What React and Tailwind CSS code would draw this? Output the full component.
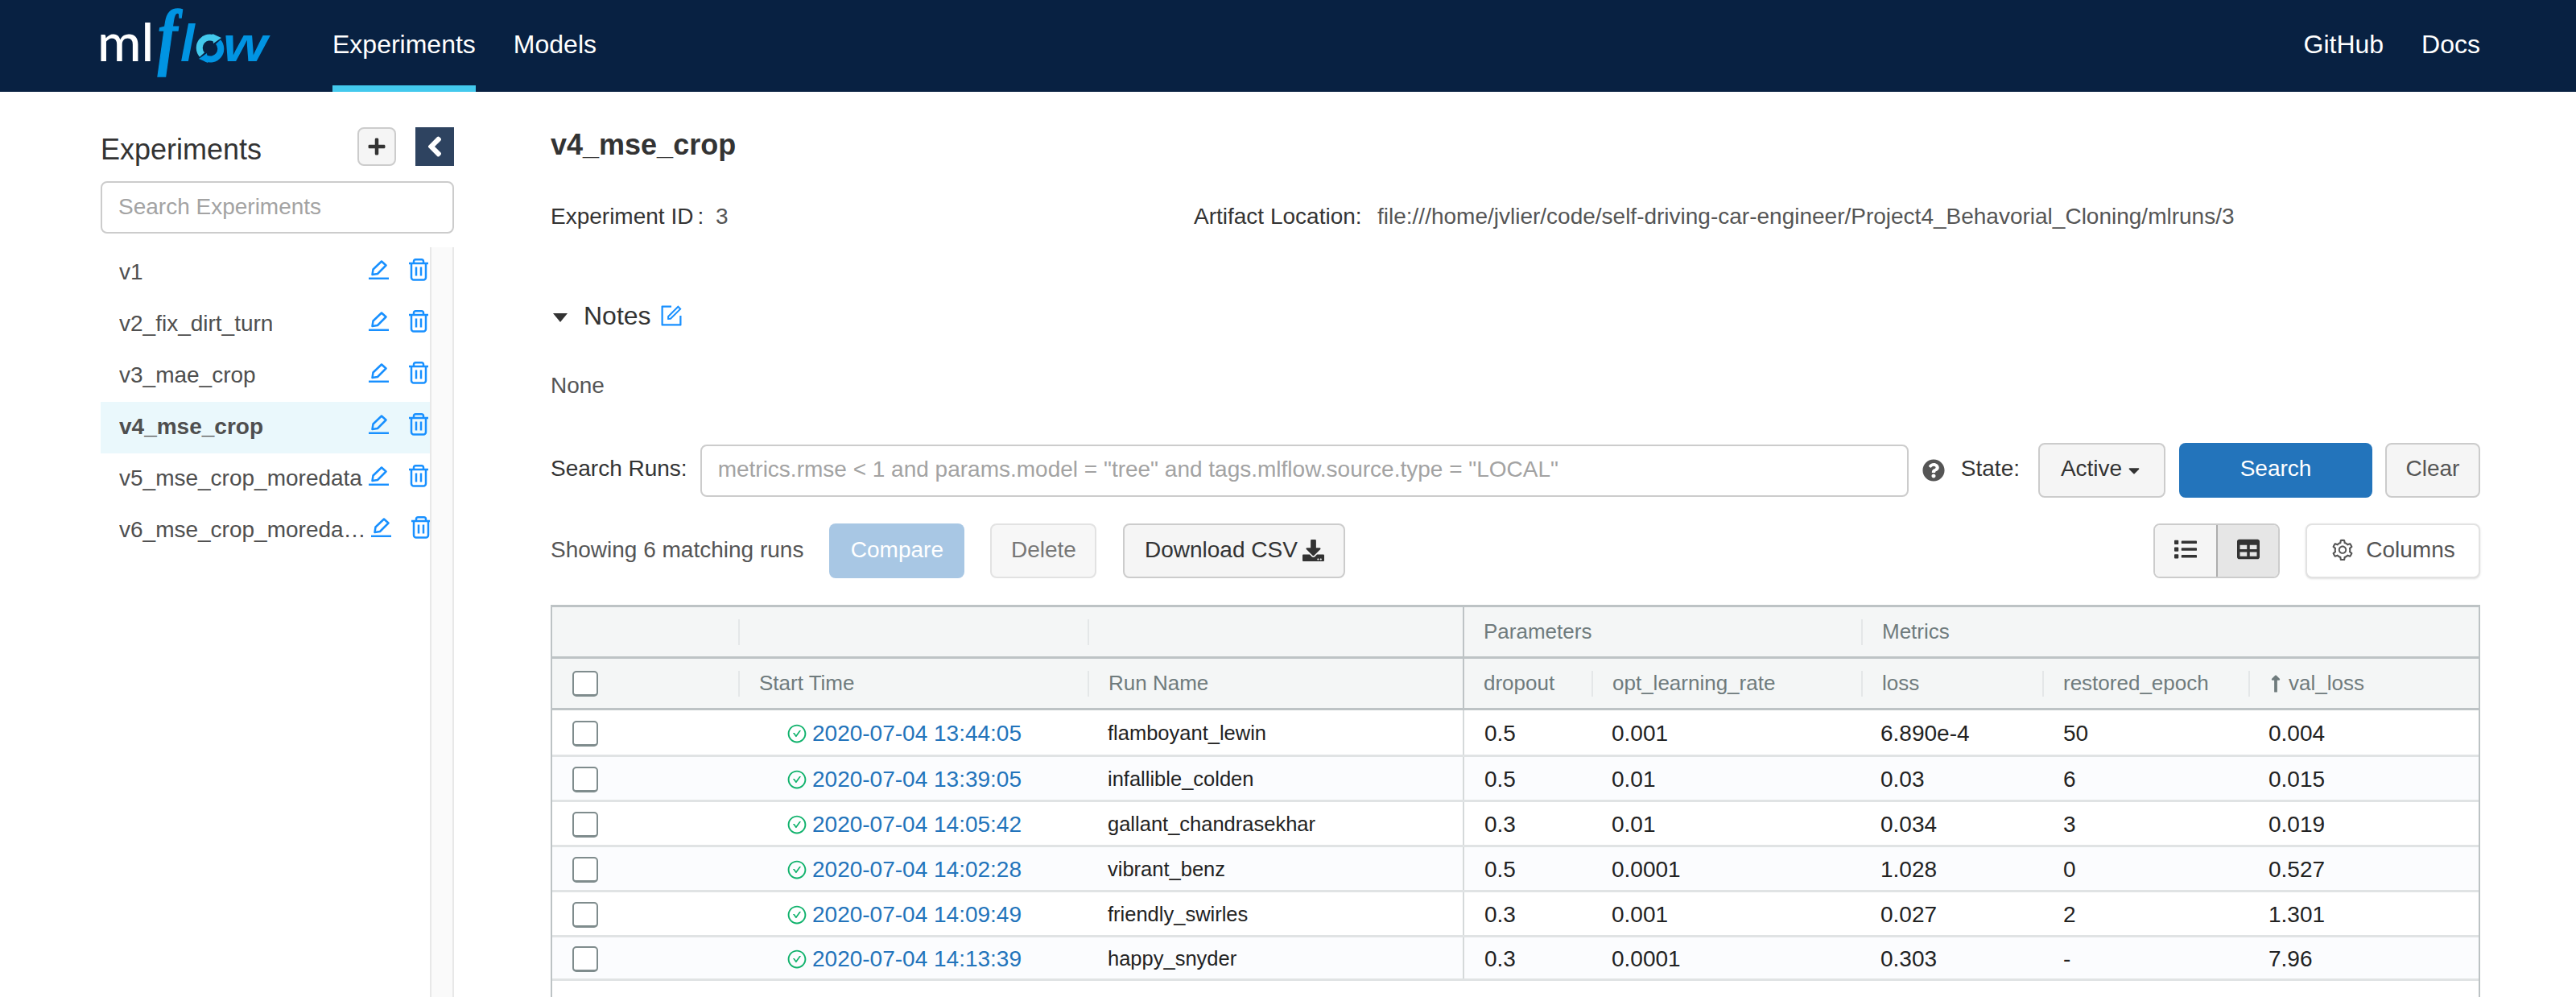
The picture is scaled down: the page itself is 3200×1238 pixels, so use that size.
import React from "react";
import {
  AiOutlineForm,
  AiOutlineSetting,
  AiOutlineCheckCircle,
} from "react-icons/ai";
import {
  FaPlus,
  FaAngleLeft,
  FaQuestionCircle,
  FaCaretDown,
  FaDownload,
  FaList,
  FaTable,
  FaLongArrowAltUp,
} from "react-icons/fa";

const experiments = [
  { name: "v1" },
  { name: "v2_fix_dirt_turn" },
  { name: "v3_mae_crop" },
  { name: "v4_mse_crop", active: true },
  { name: "v5_mse_crop_moredata" },
  { name: "v6_mse_crop_moreda…", shifted: true },
];

const runs = [
  ["2020-07-04 13:44:05", "flamboyant_lewin", "0.5", "0.001", "6.890e-4", "50", "0.004"],
  ["2020-07-04 13:39:05", "infallible_colden", "0.5", "0.01", "0.03", "6", "0.015"],
  ["2020-07-04 14:05:42", "gallant_chandrasekhar", "0.3", "0.01", "0.034", "3", "0.019"],
  ["2020-07-04 14:02:28", "vibrant_benz", "0.5", "0.0001", "1.028", "0", "0.527"],
  ["2020-07-04 14:09:49", "friendly_swirles", "0.3", "0.001", "0.027", "2", "1.301"],
  ["2020-07-04 14:13:39", "happy_snyder", "0.3", "0.0001", "0.303", "-", "7.96"],
];

const gridCols =
  "grid grid-cols-[231px_434px_466px_160px_335px_225px_256px_1fr]";

const Logo = () => (
  <svg width="208" height="80" viewBox="0 0 208 80" className="mr-[81px] mb-[6px] shrink-0 overflow-visible">
    <text x="-3" y="62" fontSize="66" fontFamily="Lato, sans-serif" fontWeight="500" fill="#fff">
      ml
    </text>
    <text
      transform="translate(72 62) scale(0.8 1)"
      fontSize="92"
      fontFamily="'Liberation Serif', serif"
      fontStyle="italic"
      fontWeight="700"
      fill="#0194e2"
      stroke="#0194e2"
      strokeWidth="1.5"
    >
      f
    </text>
    <text x="100" y="62" fontSize="64" fontFamily="'Liberation Sans', sans-serif" fontStyle="italic" fontWeight="700" fill="#0194e2">
      l
    </text>
    {/* the o is two chasing arrows */}
    <g fill="none" strokeWidth="8" transform="translate(120 29)">
      <path d="M23 5 A 13 13 0 0 0 7 25" stroke="#43c9ed" />
      <path d="M11 29 A 13 13 0 0 0 27 9" stroke="#0194e2" />
      <path d="M20 -1 L31 4 L21 11 Z" fill="#43c9ed" />
      <path d="M14 35 L3 30 L13 23 Z" fill="#0194e2" />
    </g>
    <text
      x="153"
      y="62"
      fontSize="62"
      textLength="55"
      lengthAdjust="spacingAndGlyphs"
      fontFamily="'Liberation Sans', sans-serif"
      fontStyle="italic"
      fontWeight="700"
      fill="#0194e2"
    >
      w
    </text>
  </svg>
);

const EditIcon = () => (
  <svg width="25" height="24" viewBox="0 0 25 24" fill="none" stroke="#1890ff" strokeWidth="2.5" className="shrink-0 mb-[8px]">
    <path d="M0 22.8H25" />
    <path d="M4.5 18 L5.5 11.5 L16 1.5 L21.5 6.5 L11 17 Z" strokeLinejoin="round" />
  </svg>
);

const TrashIcon = () => (
  <svg width="24" height="28" viewBox="0 0 24 28" fill="none" stroke="#1890ff" strokeWidth="2.5" className="shrink-0 ml-[25px] mb-[8px]">
    <path d="M0 6H24" />
    <path d="M6 6V3.5a2.2 2.2 0 0 1 2.2-2.2h7.6a2.2 2.2 0 0 1 2.2 2.2V6" />
    <path d="M3 6V23.5a3 3 0 0 0 3 3h12a3 3 0 0 0 3-3V6" />
    <path d="M9 10.5V21.5M15 10.5V21.5" />
  </svg>
);

const Header = () => (
  <header className="h-[114px] bg-[#082142] flex items-center pl-[124px] pr-[119px] text-white text-[32px]">
    <Logo />
    <nav className="flex h-full gap-[47px]">
      <a className="flex items-center h-full border-b-8 border-[#43c9ed] pt-[4px]">
        Experiments
      </a>
      <a className="flex items-center h-full pb-[4px]">Models</a>
    </nav>
    <div className="ml-auto flex gap-[47px] pb-[4px]">
      <a>GitHub</a>
      <a>Docs</a>
    </div>
  </header>
);

const Sidebar = () => (
  <aside className="w-[439px] ml-[125px] shrink-0 pt-[44px] flex flex-col h-[1124px]">
    <div className="flex items-center h-[48px] mb-[19px]">
      <h2 className="text-[36px] text-[#333] flex-1 pt-[8px]">Experiments</h2>
      <button className="w-[48px] h-[48px] rounded-lg border-2 border-[#ccc] bg-[#f5f5f5] flex items-center justify-center text-[#333] text-[24px]">
        <FaPlus />
      </button>
      <button className="w-[48px] h-[48px] ml-[24px] bg-[#2e4360] flex items-center justify-center text-white text-[40px]">
        <FaAngleLeft />
      </button>
    </div>
    <input
      className="h-[65px] w-full border-2 border-[#ccc] rounded-lg px-[20px] pb-[2px] text-[28px] placeholder:text-[#a3a3a3] bg-white"
      placeholder="Search Experiments"
    />
    <div className="flex flex-1 mt-[17px]">
      <ul className="w-[409px]">
        {experiments.map((exp) => (
          <li
            key={exp.name}
            className={`h-[64px] flex items-center pl-[23px] text-[28px] text-[#4f4f4f] ${
              exp.active ? "bg-[#eaf8fc] font-bold" : ""
            } ${exp.shifted ? "pr-0 -mr-[1px]" : "pr-[2px]"}`}
          >
            <span className="flex-1 whitespace-nowrap overflow-hidden pb-[2px]">
              {exp.name}
            </span>
            <EditIcon />
            <TrashIcon />
          </li>
        ))}
      </ul>
      <div className="w-[30px] bg-[#fafafa] border-x-2 border-[#e8e8e8]" />
    </div>
  </aside>
);

const Checkbox = ({ className = "" }) => (
  <div className={`w-[32px] h-[32px] rounded-[5px] border-2 border-[#7f8c8d] border-b-[3px] bg-white ${className}`} />
);

const HeaderCell = ({ children, divider = true, className = "" }) => (
  <div className={`flex items-center h-full ${className}`}>
    <div className={`flex items-center h-[32px] pl-[24px] whitespace-nowrap ${divider ? "border-l-2 border-[#e4e7e8]" : ""}`}>
      {children}
    </div>
  </div>
);

const RunsTable = () => (
  <div className="mt-[33px] flex-1 border-x-2 border-t-[3px] border-[#bdc3c5] text-[26px]">
    <div className={`${gridCols} h-[64px] bg-[#f4f6f6] border-b-[3px] border-[#bdc3c5] text-[#6f7b7d]`}>
      <div />
      <HeaderCell />
      <HeaderCell />
      <div className="col-span-2 border-l-2 border-[#bdc3c5] flex items-center pl-[24px]">
        Parameters
      </div>
      <HeaderCell className="col-span-3">Metrics</HeaderCell>
    </div>
    <div className={`${gridCols} h-[64px] bg-[#f4f6f6] border-b-[3px] border-[#bdc3c5] text-[#6f7b7d]`}>
      <div className="flex items-center pl-[25px]">
        <Checkbox />
      </div>
      <HeaderCell>Start Time</HeaderCell>
      <HeaderCell>Run Name</HeaderCell>
      <div className="border-l-2 border-[#bdc3c5] flex items-center pl-[24px]">
        dropout
      </div>
      <HeaderCell>opt_learning_rate</HeaderCell>
      <HeaderCell>loss</HeaderCell>
      <HeaderCell>restored_epoch</HeaderCell>
      <HeaderCell>
        <FaLongArrowAltUp className="text-[24px] -ml-[4px] mr-[4px]" />
        val_loss
      </HeaderCell>
    </div>
    {runs.map((run, i) => (
      <div
        key={run[0]}
        className={`${gridCols} border-b-[3px] border-[#e0e3e4] text-[28px] text-[#222] ${
          i === 0 ? "h-[58px]" : i === 5 ? "h-[54px]" : "h-[56px]"
        } ${i % 2 === 1 ? "bg-[#fbfcfe]" : "bg-white"}`}
      >
        <div className="flex items-center pl-[25px]">
          <Checkbox className="mt-[3px]" />
        </div>
        <div className="flex items-center pl-[60px] pt-[2px] text-[#2374bb]">
          <AiOutlineCheckCircle className="text-[#10b26c] text-[26px] mr-[6px]" />
          {run[0]}
        </div>
        <div className="flex items-center pl-[25px] pt-[2px] text-[25.5px]">{run[1]}</div>
        <div className="flex items-center pl-[25px] pt-[2px] border-l-2 border-[#d5d9da]">{run[2]}</div>
        <div className="flex items-center pl-[25px] pt-[2px]">{run[3]}</div>
        <div className="flex items-center pl-[24px] pt-[2px]">{run[4]}</div>
        <div className="flex items-center pl-[26px] pt-[2px]">{run[5]}</div>
        <div className="flex items-center pl-[25px] pt-[2px]">{run[6]}</div>
      </div>
    ))}
  </div>
);

const Main = () => (
  <main className="flex-1 ml-[120px] pr-[119px] flex flex-col h-[1124px] text-[28px] text-[#333]">
    <h1 className="mt-[42px] h-[48px] flex items-center text-[36px] font-bold">
      v4_mse_crop
    </h1>
    <div className="mt-[45px] h-[40px] flex items-center">
      <span className="w-[205px]">
        Experiment ID<span className="ml-[5px]">:</span>
      </span>
      <span className="w-[594px] text-[#555]">3</span>
      <span className="w-[228px]">Artifact Location:</span>
      <span className="text-[#555]">
        file:///home/jvlier/code/self-driving-car-engineer/Project4_Behavorial_Cloning/mlruns/3
      </span>
    </div>
    <div className="mt-[81px] h-[44px] flex items-center">
      <svg width="18" height="11" viewBox="0 0 18 11" className="ml-[3px] mt-[5px]">
        <polygon points="0,0 18,0 9,11" fill="#333" />
      </svg>
      <span className="ml-[20px] text-[32px]">Notes</span>
      <AiOutlineForm className="ml-[9px] text-[#1890ff] text-[32px]" />
    </div>
    <div className="mt-[45px] h-[40px] flex items-center text-[#555]">None</div>
    <div className="mt-[51px] h-[68px] flex items-center">
      <span className="pb-[4px]">Search Runs:</span>
      <input
        className="ml-[16px] flex-1 h-[65px] border-2 border-[#ccc] rounded-lg px-[20px] pb-[2px] placeholder:text-[#a3a3a3]"
        placeholder={'metrics.rmse < 1 and params.model = "tree" and tags.mlflow.source.type = "LOCAL"'}
      />
      <FaQuestionCircle className="ml-[17px] text-[#555] text-[28px] shrink-0" />
      <span className="ml-[20px] pb-[4px]">State:</span>
      <button className="ml-[23px] w-[158px] h-[68px] rounded-lg border-2 border-[#ccc] bg-[#f5f5f5] flex items-center justify-center gap-[4px] pb-[4px]">
        Active
        <FaCaretDown className="text-[22px] mt-[4px]" />
      </button>
      <button className="ml-[17px] w-[240px] h-[68px] rounded-lg bg-[#2374bb] text-white pb-[4px]">
        Search
      </button>
      <button className="ml-[16px] w-[118px] h-[68px] rounded-lg border-2 border-[#ccc] bg-[#f5f5f5] text-[#555] pb-[4px]">
        Clear
      </button>
    </div>
    <div className="mt-[32px] h-[68px] flex items-center">
      <span className="text-[#555] pb-[2px]">Showing 6 matching runs</span>
      <button className="ml-[32px] w-[168px] h-[68px] rounded-lg bg-[#a8c7e4] text-white pb-[2px]">
        Compare
      </button>
      <button className="ml-[32px] w-[132px] h-[68px] rounded-lg border-2 border-[#e2e2e2] bg-[#f7f7f7] text-[#777] pb-[2px]">
        Delete
      </button>
      <button className="ml-[33px] w-[276px] h-[68px] rounded-lg border-2 border-[#ccc] bg-[#f5f5f5] flex items-center justify-center gap-[6px] text-[#333] pb-[2px]">
        Download CSV
        <FaDownload className="text-[27px]" />
      </button>
      <div className="ml-auto flex h-[68px] w-[157px] rounded-lg border-2 border-[#ccc] overflow-hidden">
        <div className="w-[76px] bg-[#f5f5f5] flex items-center justify-center text-[#333] text-[28px] pb-[4px]">
          <FaList />
        </div>
        <div className="flex-1 bg-[#e6e6e6] border-l-2 border-[#adadad] flex items-center justify-center text-[#333] text-[28px] pb-[4px]">
          <FaTable />
        </div>
      </div>
      <button className="ml-[32px] w-[217px] h-[68px] rounded-lg border-2 border-[#e2e2e2] bg-white shadow-sm flex items-center justify-center gap-[14px] text-[#555] pb-[2px]">
        <AiOutlineSetting className="text-[30px]" />
        Columns
      </button>
    </div>
    <RunsTable />
  </main>
);

export default function App() {
  return (
    <div className="h-[1238px] overflow-hidden bg-white font-['Liberation_Sans',sans-serif]">
      <Header />
      <div className="flex">
        <Sidebar />
        <Main />
      </div>
    </div>
  );
}
